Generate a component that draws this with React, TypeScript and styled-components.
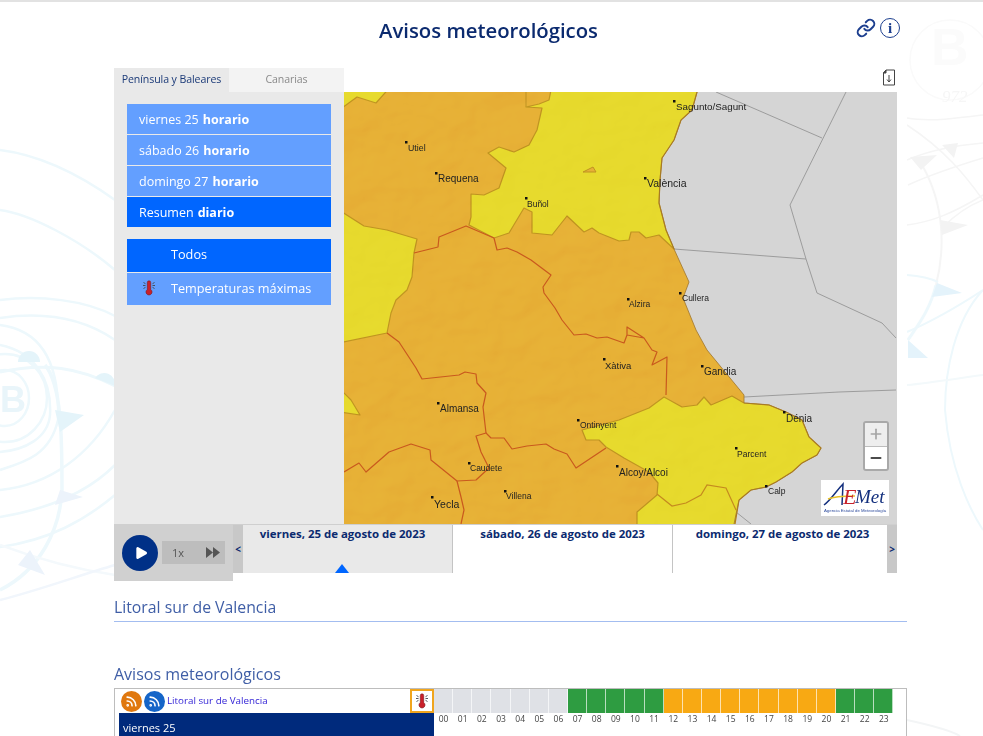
import React from 'react'
import styled, { createGlobalStyle } from 'styled-components'
import { Link, Rss, Play, Plus, Minus } from 'lucide-react'

const FONT = `"Open Sans", "Liberation Sans", sans-serif`
const NAVY = '#0b2a6f'

const days = ['viernes 25', 'sábado 26', 'domingo 27']
const dateTabs = ['viernes, 25 de agosto de 2023', 'sábado, 26 de agosto de 2023', 'domingo, 27 de agosto de 2023']

const cities = [
  { name: 'Utiel', x: 407, y: 142, tx: 409, ty: 151, size: 8.8 },
  { name: 'Requena', x: 437, y: 173, tx: 439, ty: 182, size: 10 },
  { name: 'Buñol', x: 527, y: 198, tx: 528, ty: 207, size: 8.5 },
  { name: 'Sagunto/Sagunt', x: 675, y: 101, tx: 677, ty: 110, size: 9.8 },
  { name: 'València', x: 646, y: 178, tx: 648, ty: 187, size: 10.5 },
  { name: 'Alzira', x: 629, y: 299, tx: 630, ty: 307, size: 8.5 },
  { name: 'Cullera', x: 681, y: 293, tx: 683, ty: 301, size: 8.5 },
  { name: 'Xàtiva', x: 605, y: 359, tx: 606, ty: 369, size: 9.5 },
  { name: 'Gandia', x: 703, y: 366, tx: 705, ty: 375, size: 10 },
  { name: 'Ontinyent', x: 579, y: 420, tx: 581, ty: 428, size: 8.5 },
  { name: 'Alcoy/Alcoi', x: 618, y: 466, tx: 620, ty: 476, size: 10 },
  { name: 'Almansa', x: 439, y: 403, tx: 441, ty: 412, size: 10 },
  { name: 'Caudete', x: 470, y: 463, tx: 471, ty: 471, size: 8.5 },
  { name: 'Villena', x: 506, y: 491, tx: 507, ty: 499, size: 8.5 },
  { name: 'Yecla', x: 433, y: 497, tx: 435, ty: 508, size: 10.5 },
  { name: 'Parcent', x: 737, y: 448, tx: 738, ty: 457, size: 8.5 },
  { name: 'Dénia', x: 785, y: 412, tx: 787, ty: 422, size: 10 },
  { name: 'Calp', x: 767, y: 486, tx: 769, ty: 494, size: 8.5 },
]

const hourColor = (h: number) => {
  if (h < 7) return '#dfe1e6'
  if (h < 12) return '#2e9c41'
  if (h < 21) return '#f8a913'
  return '#2e9c41'
}
const hours = Array.from({ length: 24 }, (_, h) => h)

const GlobalStyle = createGlobalStyle`
  html, body { margin: 0; padding: 0; height: 100%; overflow: hidden; background: #fff; }
  * { box-sizing: border-box; }
  body { font-family: ${FONT}; }
`

const Page = styled.div`
  position: relative;
  width: 983px;
  height: 736px;
  overflow: hidden;
  border-top: 2px solid #e2e2e2;
`
const Backdrop = styled.svg`
  position: absolute;
  left: 0;
  top: -2px;
  width: 983px;
  height: 736px;
`
const Header = styled.header`
  position: relative;
  height: 66px;
  display: flex;
  align-items: flex-start;
  justify-content: center;
  padding: 13px 6px 0 0;
`
const Title = styled.h1`
  margin: 0;
  font-size: 20.3px;
  line-height: 30px;
  font-weight: 600;
  color: ${NAVY};
`
const HeaderIcons = styled.div`
  position: absolute;
  top: 16px;
  right: 83px;
  display: flex;
  align-items: center;
  gap: 4px;
  color: #1d3f8f;
`
const InfoMark = styled.span`
  width: 20px;
  height: 20px;
  border: 1.5px solid #1d3f8f;
  border-radius: 50%;
  display: flex;
  align-items: center;
  justify-content: center;
  font: 700 15px "Liberation Serif", serif;
  color: #1d3f8f;
`
const Main = styled.main`
  position: relative;
  width: 793px;
  margin-left: 114px;
  background: #fff;
`
const Viewer = styled.section`
  width: 783px;
`
const TopBar = styled.div`
  display: flex;
  align-items: center;
  height: 24px;
`
const Tab = styled.div<{ $active?: boolean }>`
  width: 115px;
  height: 24px;
  padding-bottom: 2px;
  display: flex;
  align-items: center;
  justify-content: center;
  font-size: 10.6px;
  letter-spacing: -0.1px;
  background: ${p => (p.$active ? '#e9e9e9' : '#f3f3f3')};
  color: ${p => (p.$active ? '#1b3a78' : '#8a8a8a')};
`
const DownloadBtn = styled.div`
  margin-left: auto;
  margin-right: 1px;
  height: 24px;
  display: flex;
  align-items: flex-start;
  padding-top: 1px;
`
const Stage = styled.div`
  display: flex;
  height: 432px;
`
const Side = styled.aside`
  width: 230px;
  flex: none;
  background: #e9e9e9;
  padding: 12px 13px;
`
const DayList = styled.div`
  display: flex;
  flex-direction: column;
  gap: 1px;
`
const DayBtn = styled.div<{ $active?: boolean }>`
  height: 30px;
  display: flex;
  align-items: center;
  padding-left: 12px;
  font-size: 12.5px;
  color: #fff;
  background: ${p => (p.$active ? '#0066ff' : '#639fff')};
  b { font-weight: 700; margin-left: 4px; }
`
const FilterList = styled(DayList)`
  margin-top: 12px;
`
const FilterBtn = styled.div<{ $active?: boolean }>`
  height: 32.5px;
  display: flex;
  align-items: center;
  padding-bottom: 2px;
  font-size: 12.7px;
  color: #fff;
  background: ${p => (p.$active ? '#0066ff' : '#639fff')};
`
const FilterIcon = styled.span`
  width: 44px;
  display: flex;
  justify-content: center;
`
const MapWrap = styled.div`
  position: relative;
  flex: 1;
  overflow: hidden;
  background: #d5d5d5;
`
const MapSvg = styled.svg`
  display: block;
  width: 553px;
  height: 432px;
`
const ZoomBox = styled.div`
  position: absolute;
  right: 8px;
  top: 329px;
  width: 26px;
  height: 50px;
  border: 2px solid #a9a9a9;
  border-radius: 3px;
  display: flex;
  flex-direction: column;
  overflow: hidden;
`
const ZoomBtn = styled.div<{ $disabled?: boolean }>`
  flex: 1;
  display: flex;
  align-items: center;
  justify-content: center;
  background: ${p => (p.$disabled ? '#eeeeee' : '#fff')};
  color: ${p => (p.$disabled ? '#a5a5a5' : '#111')};
  & + & { border-top: 1px solid #bdbdbd; }
`
const Logo = styled.svg`
  position: absolute;
  right: 8px;
  top: 388px;
  width: 68px;
  height: 36px;
  background: #fff;
`
const Timeline = styled.div`
  display: flex;
  align-items: flex-start;
`
const Player = styled.div`
  width: 119px;
  height: 57px;
  flex: none;
  background: #d0d0d0;
  display: flex;
  align-items: center;
  padding-left: 8px;
  gap: 4px;
`
const PlayBtn = styled.div`
  width: 36px;
  height: 36px;
  border-radius: 50%;
  background: #003087;
  display: flex;
  align-items: center;
  justify-content: center;
  color: #fff;
`
const Speed = styled.div`
  width: 63px;
  height: 23px;
  background: #bdbdbd;
  display: flex;
  align-items: center;
  justify-content: space-between;
  padding: 0 5px 0 10px;
  font-size: 11px;
  color: #555;
`
const Dates = styled.div`
  position: relative;
  flex: 1;
  height: 49px;
  display: flex;
  border-top: 1px solid #cfcfcf;
`
const DateTab = styled.div<{ $active?: boolean }>`
  position: relative;
  width: 220px;
  flex: none;
  text-align: center;
  font-size: 11.45px;
  line-height: 17px;
  font-weight: 700;
  color: ${NAVY};
  background: ${p => (p.$active ? '#e9e9e9' : '#fff')};
  border-right: 1px solid #c4c4c4;
`
const Caret = styled.span`
  position: absolute;
  left: 102px;
  bottom: 0;
  border-left: 7px solid transparent;
  border-right: 7px solid transparent;
  border-bottom: 9px solid #0066ff;
`
const Arrow = styled.span<{ $side: 'left' | 'right' }>`
  position: absolute;
  top: 0;
  bottom: 0;
  ${p => p.$side}: 0;
  width: 10px;
  background: #c8c8c8;
  display: flex;
  align-items: center;
  justify-content: center;
  font-size: 10px;
  font-weight: 700;
  color: ${NAVY};
`
const ZoneHeading = styled.h2`
  margin: 0;
  height: 41px;
  padding-top: 15px;
  font-size: 15.8px;
  line-height: 22px;
  font-weight: 400;
  color: #3f5ea6;
  border-bottom: 1px solid #a3bdf0;
`
const TableHeading = styled.h2`
  margin: 41px 0 0;
  font-size: 16px;
  line-height: 22px;
  font-weight: 400;
  color: #3f5ea6;
`
const WarnTable = styled.div`
  margin-top: 3px;
  height: 60px;
  display: grid;
  grid-template-columns: 319px 1fr;
  border: 1px solid #bdbdbd;
  border-bottom: 0;
`
const ZoneCol = styled.div`
  padding-left: 4px;
`
const ZoneRow = styled.div`
  height: 24px;
  display: flex;
  align-items: center;
  padding-left: 2px;
  gap: 1px;
`
const Feed = styled.span<{ $color: string }>`
  width: 21px;
  height: 21px;
  margin-right: 1px;
  border-radius: 50%;
  background: ${p => p.$color};
  display: flex;
  align-items: center;
  justify-content: center;
  color: #fff;
`
const ZoneLink = styled.a`
  font-size: 9.8px;
  margin-top: -2px;
  color: #3324d6;
`
const AlertBox = styled.span`
  margin-left: auto;
  width: 24px;
  height: 24px;
  border: 2px solid #f0a51e;
  display: flex;
  align-items: center;
  justify-content: center;
  background: #fff;
`
const DayBand = styled.div`
  height: 24px;
  padding: 4px 0 0 4px;
  background: #002a7c;
  color: #fff;
  font-size: 11px;
  display: flex;
  align-items: center;
`
const HourGrid = styled.div`
  display: grid;
  grid-template-columns: repeat(24, 19.15px);
  align-content: start;
`
const HourCell = styled.div<{ $color: string }>`
  height: 24px;
  background: ${p => p.$color};
  border-right: 1px solid #ffffffaa;
`
const HourLabel = styled.div`
  font-size: 8.5px;
  line-height: 12px;
  text-align: center;
  color: #444;
`

function Thermometer({ size = 16 }: { size?: number }) {
  return (
    <svg width={size} height={size} viewBox="0 0 16 16" fill="none">
      <g stroke="#3f474f" strokeWidth="0.9">
        <path d="M2.5 2.5l2 1.2M2 5.5h2.5M2.500 8.500l2-1.200M13.500 2.500l-2 1.200M14 5.500h-2.500M13.500 8.500l-2-1.200" />
      </g>
      <path d="M6.300 2.500a1.700 1.700 0 0 1 3.400 0v7a3 3 0 1 1-3.400 0z" fill="#c9202a" stroke="#7b1a1f" strokeWidth="0.6" />
    </svg>
  )
}

function WeatherBackdrop() {
  return (
    <Backdrop viewBox="0 0 983 736" fill="none">
      <g stroke="#edf8fc" strokeWidth="2.500">
        <ellipse cx="5" cy="398" rx="24" ry="28" />
        <ellipse cx="5" cy="398" rx="42" ry="44" />
        <path d="M0 345C35 352 52 380 50 415C48 438 25 450 0 452" />
        <path d="M0 325C40 330 60 360 58 420C50 455 25 462 0 470" />
        <path d="M0 490C50 485 90 455 115 410" />
        <path d="M0 517C55 508 90 490 115 465" />
        <path d="M0 547C50 540 85 520 115 495" />
        <path d="M0 372C45 362 80 368 115 386" strokeWidth="3" />
        <path d="M0 318C40 312 80 316 115 340" />
        <path d="M0 300C40 295 85 300 115 316" />
        <path d="M45 365C62 385 62 440 62 490C60 530 40 570 0 590" strokeWidth="3.500" />
        <path d="M0 210C30 214 80 240 115 270" />
        <path d="M0 150C40 155 80 175 115 200" />
        <path d="M0 545C40 560 80 570 115 575" stroke="#f4f9fc" />
        <path d="M0 600C40 590 80 575 115 565" stroke="#f1f6fc" />
      </g>
      <g fill="#e4f4fa">
        <path d="M18 362a11 11 0 0 1 22 0z" />
        <path d="M95 378a11 11 0 0 1 20 8z" />
        <path d="M55 410L84 415L60 432z" />
        <path d="M60 490L83 497L55 505z" fill="#ecf3fb" />
        <path d="M30 550L45 575L18 565z" fill="#ecf3fb" />
      </g>
      <text x="0" y="412" fontFamily="Liberation Sans" fontWeight="700" fontSize="36" fill="#e9f5fa">B</text>
      <g stroke="#f5f5f5" strokeWidth="1.500">
        <circle cx="950" cy="60" r="40" stroke="#fafafa" />
        <path d="M907 118C930 122 960 118 983 115" />
        <path d="M907 160C930 150 960 145 983 143" />
        <path d="M907 125C945 150 965 175 983 200" />
        <path d="M908 185C930 175 960 165 983 158" />
        <path d="M922 165C945 205 945 250 936 285" strokeWidth="2" />
        <path d="M907 225C930 222 950 215 983 195" />
        <path d="M942 228C955 215 970 205 983 200" />
      </g>
      <g fill="#f3f3f3">
        <path d="M910 157L937 155L921 170z" />
        <path d="M942 145L958 143L954 158z" />
        <path d="M940 220L968 225L942 235z" />
      </g>
      <text x="931" y="65" fontFamily="Liberation Sans" fontWeight="700" fontSize="52" fill="#fbfbfb">B</text>
      <text x="942" y="102" fontFamily="Liberation Serif" fontStyle="italic" fontSize="17" fill="#f6f6f6">972</text>
      <g stroke="#edf8fc" strokeWidth="2">
        <path d="M907 275C920 276 930 278 938 282" />
        <path d="M936 285C930 310 918 325 908 340" strokeWidth="3" />
        <path d="M907 332C935 320 960 305 983 290" />
        <path d="M983 290C955 320 945 370 945 410C950 470 970 510 983 530" />
        <path d="M907 385C930 383 960 378 983 375" stroke="#f3f9fb" />
        <path d="M907 720C930 725 950 730 960 736" stroke="#f3f5f6" />
      </g>
      <g fill="#e4f3fb">
        <path d="M937 283L962 293L932 297z" />
        <path d="M908 340L928 358H908z" />
      </g>
    </Backdrop>
  )
}

const COAST =
  '698,85 698,92 693,110 682,120 675,140 663,158 661,180 660,203 667,230 675,249 690,282 684,298 697,330 708,350 745,395 745,403 770,405 787,412 803,420 810,437 822,448 818,455 803,463 793,472 777,482 767,487 752,490 740,500 735,524 735,530'
const LAND = `340,85 ${COAST} 340,530`

function WarningMap() {
  return (
    <MapSvg viewBox="345 92 553 432">
      <defs>
        <filter id="relief" x="0" y="0" width="100%" height="100%">
          <feTurbulence type="fractalNoise" baseFrequency="0.022 0.03" numOctaves="3" seed="7" result="n" />
          <feDiffuseLighting in="n" surfaceScale="5" lightingColor="#fff" result="l">
            <feDistantLight azimuth="225" elevation="60" />
          </feDiffuseLighting>
          <feComposite in="l" in2="SourceAlpha" operator="in" />
        </filter>
      </defs>
      <rect x="345" y="92" width="553" height="432" fill="#d5d5d5" />
      <g fill="none" stroke="#9c9c9c" strokeWidth="1">
        <path d="M717 92L823 138M847 92L791 205L807 259L818 293L883 323L897 338M675 249L807 259M745 397L840 392L897 390M737 512L752 524" />
      </g>
      <polygon points={LAND} fill="#e2a02e" />

      <g fill="#e2d226" stroke="#b27d1c" strokeWidth="1.200" strokeLinejoin="round">
        <polygon points="340,85 393,85 377,103 358,97 340,110" />
        <polygon points="553,85 698,85 698,92 693,110 682,120 675,140 663,158 661,180 660,203 667,230 675,249 660,235 647,238 640,232 632,232 630,240 620,241 600,233 593,228 585,232 568,216 553,235 533,233 533,212 525,208 510,233 495,238 470,225 472,217 472,194 485,195 500,188 507,168 489,153 500,147 515,152 530,145 538,130 543,108 527,107 540,104 550,100" />
        <polygon points="340,210 365,226 388,230 418,239 415,253 413,277 408,290 397,300 392,313 388,333 340,343" />
        <polygon points="340,388 352,400 361,415 340,412" />
        <polygon points="583,430 620,420 650,408 665,397 683,407 698,405 705,397 712,405 733,396 745,403 770,405 787,412 803,420 810,437 822,448 818,455 803,463 793,472 777,482 767,487 752,490 740,500 735,530 638,530 638,512 658,495 659,483 650,472 625,458 607,447 600,440 587,440" />
      </g>
      <polygon points="584,172 594,167 597,172" fill="#e2a02e" stroke="#b27d1c" />
      <path d="M527 92V107" stroke="#b27d1c" fill="none" />

      <polygon points={LAND} fill="#808080" filter="url(#relief)" opacity="0.2" style={{ mixBlendMode: 'overlay' }} />
      <polyline points={COAST} fill="none" stroke="#a0762a" strokeWidth="0.8" />

      <g fill="none" stroke="#c9591e" strokeWidth="1.200" strokeLinejoin="round">
        <path d="M415 253L439 247L440 237L467 226L495 238L498 250L508 248L518 252L532 260L552 275L544 287L545 293L556 308L563 320L575 335L587 334L598 338L608 337L625 343L628 335L645 338L628 327L628 335M645 338L653 350L658 352L653 365L668 357L667 395" />
        <path d="M607 448L577 468L568 454L555 449L547 444L528 446L513 449L505 438L492 438L487 433L477 436L482 452L490 468L477 480L458 481L432 460L431 450L412 444L390 452L367 472L360 463L345 472" />
        <path d="M458 481L462 497L465 510L462 524" />
        <path d="M487 433L484 407L487 393L478 383L477 374L466 372L460 375L423 379L417 368L400 342L388 333" />
      </g>
      <path d="M658 494L673 506L687 503L702 495L708 485L727 488L737 510" fill="none" stroke="#c58a1f" strokeWidth="1.200" />

      {cities.map(c => (
        <g key={c.name}>
          <rect x={c.x - 1} y={c.y - 1} width="2.500" height="2.500" fill="#111" />
          <text x={c.tx} y={c.ty} fontFamily="Liberation Sans" fontSize={c.size} fill="#222">
            {c.name}
          </text>
        </g>
      ))}
    </MapSvg>
  )
}

export default function App() {
  return (
    <>
      <GlobalStyle />
      <Page>
        <WeatherBackdrop />
        <Header>
          <Title>Avisos meteorológicos</Title>
          <HeaderIcons>
            <Link size={20} strokeWidth={2.4} />
            <InfoMark>i</InfoMark>
          </HeaderIcons>
        </Header>
        <Main>
          <Viewer>
            <TopBar>
              <Tab $active>Península y Baleares</Tab>
              <Tab>Canarias</Tab>
              <DownloadBtn>
                <svg width="14" height="17" viewBox="0 0 14 17" fill="#fff" stroke="#444" strokeWidth="1">
                  <path d="M4 1h8.500v15h-11v-12z" />
                  <path d="M1.500 4H4V1z" fill="#444" />
                  <path d="M7 6v7M5 10.500l2 2.500 2-2.500" fill="none" />
                </svg>
              </DownloadBtn>
            </TopBar>
            <Stage>
              <Side>
                <DayList>
                  {days.map(d => (
                    <DayBtn key={d}>
                      {d} <b>horario</b>
                    </DayBtn>
                  ))}
                  <DayBtn $active>
                    Resumen <b>diario</b>
                  </DayBtn>
                </DayList>
                <FilterList>
                  <FilterBtn $active>
                    <FilterIcon />
                    Todos
                  </FilterBtn>
                  <FilterBtn>
                    <FilterIcon>
                      <Thermometer />
                    </FilterIcon>
                    Temperaturas máximas
                  </FilterBtn>
                </FilterList>
              </Side>
              <MapWrap>
                <WarningMap />
                <ZoomBox>
                  <ZoomBtn $disabled>
                    <Plus size={16} strokeWidth={2.5} />
                  </ZoomBtn>
                  <ZoomBtn>
                    <Minus size={16} strokeWidth={2.5} />
                  </ZoomBtn>
                </ZoomBox>
                <Logo viewBox="0 0 68 36">
                  <path d="M3 25C10 20 16 10 22 4L21 25" fill="none" stroke="#14307e" strokeWidth="1.500" />
                  <path d="M7 19C14 16 24 16 34 16" fill="none" stroke="#e9c22a" strokeWidth="1.500" />
                  <text x="22" y="24" fontFamily="Liberation Serif" fontStyle="italic" fontSize="22" fill="#c8232c">
                    E
                  </text>
                  <text x="34" y="23" fontFamily="Liberation Serif" fontStyle="italic" fontSize="19" fill="#14307e">
                    Met
                  </text>
                  <text x="3" y="32" fontFamily="Liberation Sans" fontSize="4.300" fill="#2c4a9c">
                    Agencia Estatal de Meteorología
                  </text>
                </Logo>
              </MapWrap>
            </Stage>
            <Timeline>
              <Player>
                <PlayBtn>
                  <Play size={16} fill="#fff" strokeWidth={0} style={{ marginLeft: 2 }} />
                </PlayBtn>
                <Speed>
                  1x
                  <svg width="14" height="11" viewBox="0 0 14 11" fill="#555">
                    <path d="M0 0l7 5.500L0 11zM7 0l7 5.500L7 11z" />
                  </svg>
                </Speed>
              </Player>
              <Dates>
                {dateTabs.map((t, i) => (
                  <DateTab key={t} $active={i === 0}>
                    {t}
                    {i === 0 && <Caret />}
                  </DateTab>
                ))}
                <Arrow $side="left">&lt;</Arrow>
                <Arrow $side="right">&gt;</Arrow>
              </Dates>
            </Timeline>
          </Viewer>
          <ZoneHeading>Litoral sur de Valencia</ZoneHeading>
          <TableHeading>Avisos meteorológicos</TableHeading>
          <WarnTable>
            <ZoneCol>
              <ZoneRow>
                <Feed $color="#e0780f">
                  <Rss size={13} strokeWidth={3} />
                </Feed>
                <Feed $color="#1565c8">
                  <Rss size={13} strokeWidth={3} />
                </Feed>
                <ZoneLink>Litoral sur de Valencia</ZoneLink>
                <AlertBox>
                  <Thermometer />
                </AlertBox>
              </ZoneRow>
              <DayBand>viernes 25</DayBand>
            </ZoneCol>
            <HourGrid>
              {hours.map(h => (
                <HourCell key={h} $color={hourColor(h)} />
              ))}
              {hours.map(h => (
                <HourLabel key={h}>{String(h).padStart(2, '0')}</HourLabel>
              ))}
            </HourGrid>
          </WarnTable>
        </Main>
      </Page>
    </>
  )
}
